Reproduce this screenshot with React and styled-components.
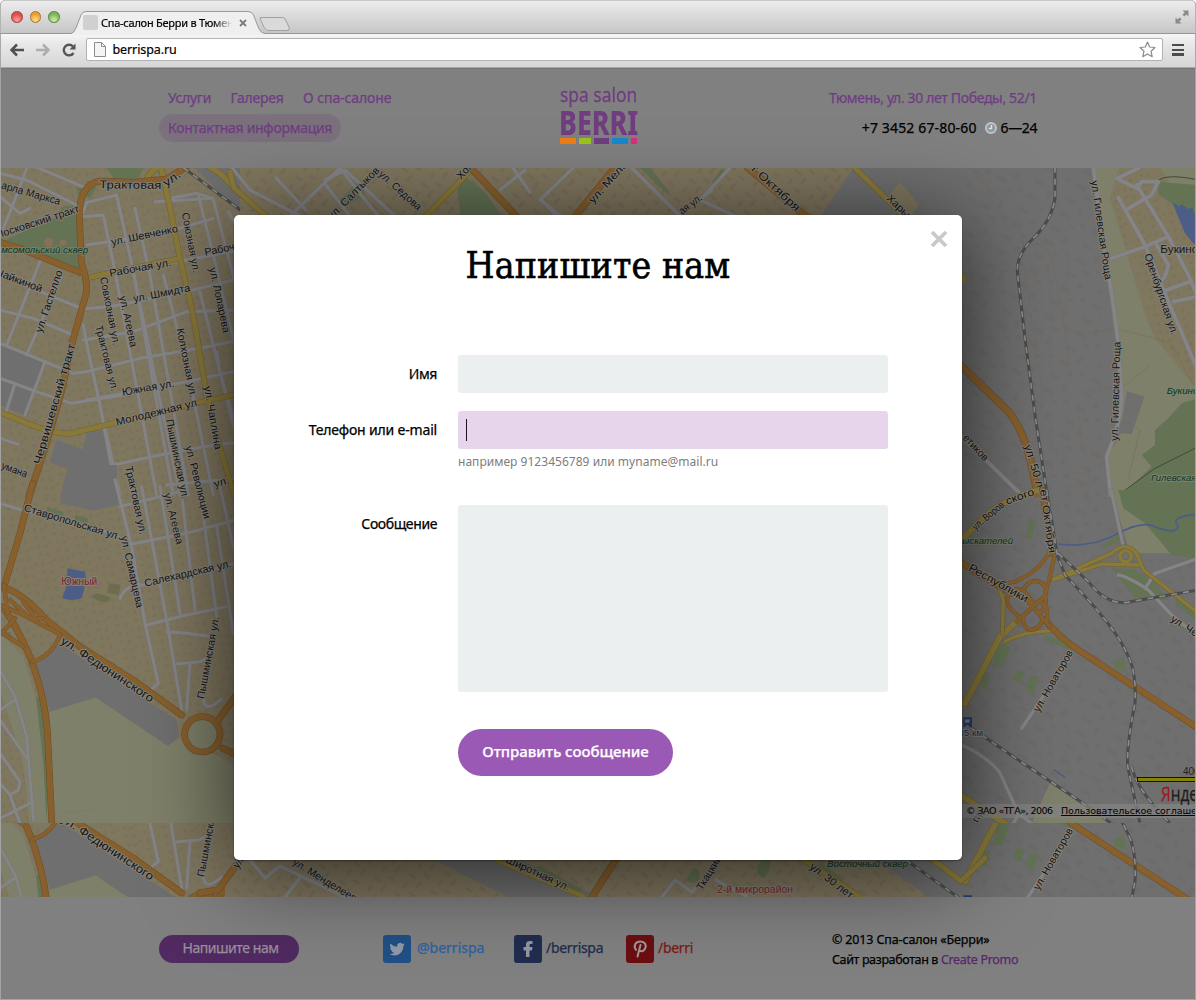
import React from 'react';
import styled, { createGlobalStyle, css } from 'styled-components';

const sans = '"Noto Sans", "Open Sans", sans-serif';
const serif = '"DejaVu Serif Condensed", "DejaVu Serif", serif';

const Global = createGlobalStyle`
  * { box-sizing: border-box; }
  body { margin: 0; background: #fff; font-family: ${sans}; }
`;

const Window = styled.div`
  position: relative;
  width: 1196px;
  height: 1000px;
  display: flex;
  flex-direction: column;
  overflow: hidden;
  border-radius: 5px 5px 0 0;
  background: #a8a8a8;
`;

/* ---------- browser chrome ---------- */
const TabStrip = styled.div`
  height: 34px;
  display: flex;
  align-items: flex-end;
  padding-left: 10px;
  border: 1px solid #b4b4b4;
  border-top-color: #c9c9c9;
  border-bottom: 1px solid #979797;
  border-radius: 5px 5px 0 0;
  background: linear-gradient(#ececec, #d9d9d9 50%, #c6c6c6);
`;
const Lights = styled.div`
  display: flex;
  gap: 7px;
  height: 22px;
  width: 60px;
`;
const Light = styled.span`
  width: 11.5px;
  height: 11.5px;
  border-radius: 50%;
  border: 1px solid ${(p) => p.$edge};
  background: radial-gradient(circle at 50% 80%, ${(p) => p.$glow}, ${(p) => p.$tone} 65%);
`;
const Tab = styled.div`
  position: relative;
  width: 194px;
  height: 23px;
  margin-bottom: -1px;
  display: flex;
  align-items: center;
  padding-left: 12px;
`;
const TabShape = styled.svg`
  position: absolute;
  left: 0;
  top: 0;
  width: 194px;
  height: 24px;
`;
const Favicon = styled.span`
  position: relative;
  width: 15px;
  height: 15px;
  border-radius: 2px;
  background: #d0d0d0;
`;
const TabTitle = styled.span`
  position: relative;
  width: 132px;
  margin-left: 3px;
  overflow: hidden;
  white-space: nowrap;
  font-size: 11px;
  line-height: 16px;
  letter-spacing: -0.25px;
  color: #000;
  -webkit-text-stroke: 0.2px #000;
  mask-image: linear-gradient(90deg, #000 112px, transparent 131px);
`;
const TabClose = styled.svg`
  position: relative;
  width: 8px;
  height: 8px;
  margin-left: 6px;
`;
const NewTab = styled.span`
  width: 26px;
  height: 14px;
  margin: 0 0 2px -3px;
  border: 1px solid #a0a0a0;
  border-radius: 3px 3px 4px 4px;
  background: #dadada;
  transform: skewX(25deg);
`;
const Expand = styled.svg`
  width: 14px;
  height: 14px;
  margin: 0 6px 9px auto;
`;
const Toolbar = styled.div`
  height: 34px;
  display: flex;
  align-items: center;
  padding: 0 11px 2px 8px;
  border: solid #a9a9a9;
  border-width: 0 1px 1px;
  background: linear-gradient(#f6f6f6, #e8e8e8 30%, #d6d6d6);
`;
const NavIcon = styled.svg`
  width: 16px;
  height: 16px;
  margin-right: ${(p) => p.$gap || 10}px;
`;
const Omnibox = styled.div`
  flex: 1;
  height: 23px;
  display: flex;
  align-items: center;
  padding: 0 6px 0 7px;
  margin-right: 9px;
  border: 1px solid #b1b1b1;
  border-radius: 2px;
  background: #fff;
`;
const Url = styled.span`
  flex: 1;
  margin-left: 7px;
  font-size: 12.5px;
  line-height: 18px;
  letter-spacing: -0.1px;
  color: #000;
  -webkit-text-stroke: 0.2px #000;
`;
const MenuIcon = styled.span`
  width: 12px;
  height: 12px;
  background: repeating-linear-gradient(#4c4c4c 0 2.5px, transparent 2.5px 4.7px);
`;

/* ---------- site ---------- */
const Site = styled.div`
  height: 932px;
  padding: 0 1px 1px;
  background: #a3a3a3;
`;
const Header = styled.header`
  height: 100px;
  display: grid;
  grid-template-columns: 1fr auto 1fr;
  padding: 0 158px;
  border-top: 1px solid #747474;
  background: #808080;
`;
const Nav = styled.nav`
  display: flex;
  flex-direction: column;
  align-items: flex-start;
  padding-top: 15px;
  color: #6f3d80;
`;
const NavRow = styled.div`
  display: flex;
  gap: 19.5px;
  height: 28px;
  padding: 0 9px;
  line-height: 28px;
  ${(p) =>
    p.$active &&
    css`
      margin-top: 2px;
      border-radius: 14px;
      background: #7a717d;
    `}
`;
const Text = styled.span`
  font-size: ${(p) => p.$size || 14}px;
  letter-spacing: ${(p) => p.$track || 0}px;
  white-space: nowrap;
  color: ${(p) => p.$color || 'inherit'};
  -webkit-text-stroke: ${(p) => (p.$thin ? 0 : 0.25)}px currentColor;
`;
const Logo = styled.div`
  display: flex;
  flex-direction: column;
  width: 78px;
  padding-top: 13px;
  color: #6f3d80;
`;
const LogoTop = styled.span`
  height: 26px;
  font-size: 20px;
  line-height: 26px;
  white-space: nowrap;
  transform: scaleX(0.87);
  transform-origin: 0 50%;
  margin-left: 1px;
  -webkit-text-stroke: 0.3px currentColor;
`;
const LogoName = styled.span`
  height: 30px;
  font-size: 33px;
  line-height: 30px;
  font-weight: 800;
  white-space: nowrap;
  transform: scaleX(0.81);
  transform-origin: 0 50%;
`;
const LogoBars = styled.div`
  display: flex;
  gap: 3px;
  height: 6px;
  margin-left: 1px;
`;
const Bar = styled.span`
  flex: ${(p) => p.$grow};
  background: ${(p) => p.$tone};
`;
const Contacts = styled.div`
  display: flex;
  flex-direction: column;
  align-items: flex-end;
  padding-top: 15px;
  line-height: 28px;
`;
const PhoneRow = styled.div`
  display: flex;
  align-items: center;
  margin-top: 2px;
  color: #000;
`;
const Clock = styled.svg`
  width: 12px;
  height: 12px;
  margin: 0 4px 0 8px;
`;
const MapSvg = styled.svg`
  display: block;
  width: 1194px;
  height: 729px;
`;
const Footer = styled.footer`
  height: 102px;
  display: grid;
  grid-template-columns: 224px 449px auto;
  align-items: start;
  padding: 38px 0 0 158px;
  background: #808080;
`;
const WriteButton = styled.button`
  width: 140px;
  height: 28px;
  padding: 0 0 3px 3px;
  border: 0;
  border-radius: 14px;
  background: #502a60;
  color: #9a8f9e;
  font-family: inherit;
`;
const Socials = styled.div`
  display: flex;
`;
const Social = styled.a`
  display: flex;
  align-items: center;
  gap: ${(p) => p.$gap}px;
  width: ${(p) => p.$width}px;
  color: ${(p) => p.$color};

  span {
    padding-bottom: 3px;
  }
`;
const SocialIcon = styled.svg`
  width: 28px;
  height: 28px;
  border-radius: 3px;
  background: ${(p) => p.$bg};
`;
const Legal = styled.div`
  display: flex;
  flex-direction: column;
  margin-top: -5px;
  line-height: 20px;
  color: #000;
`;

/* ---------- dialog ---------- */
const Dialog = styled.form`
  position: absolute;
  left: 234px;
  top: 215px;
  width: 728px;
  height: 645px;
  display: flex;
  flex-direction: column;
  border-radius: 5px;
  background: #fff;
  box-shadow: 0 10px 90px rgba(0, 0, 0, 0.68), 0 1px 2px rgba(0, 0, 0, 0.4);
`;
const Close = styled.svg`
  position: absolute;
  right: 14px;
  top: 15px;
  width: 18px;
  height: 18px;
`;
const Title = styled.h1`
  margin: 26px 0 64px;
  height: 50px;
  text-align: center;
  font: 400 37px/50px ${serif};
  letter-spacing: 0.15px;
  color: #000;
  -webkit-text-stroke: 0.6px #000;
`;
const Field = styled.div`
  display: grid;
  grid-template-columns: 203px 430px;
  column-gap: 21px;
  margin-bottom: ${(p) => p.$after}px;
`;
const Label = styled.label`
  text-align: right;
  line-height: 36px;
  color: #000;
`;
const Control = styled.div`
  display: flex;
  align-items: center;
  height: ${(p) => p.$height || 38}px;
  padding-left: 8px;
  border-radius: 3px;
  background: ${(p) => (p.$focused ? '#e6d5eb' : '#ebefef')};
`;
const Caret = styled.span`
  width: 1px;
  height: 22px;
  background: #1a1420;
`;
const Hint = styled.div`
  height: 24px;
  line-height: 22px;
`;
const Submit = styled.button`
  width: 215px;
  height: 47px;
  margin-left: 224px;
  padding: 0 0 4px;
  border: 0;
  border-radius: 24px;
  background: #9b59b6;
  color: #fff;
  font-family: inherit;
  font-weight: 500;
`;

/* ---------- map drawing ---------- */
const BEIGE = '#80775f';
const OLIVE = '#7f8069';
const GREY = '#6f6f6f';
const GREEN = '#637354';
const BLUE = '#4c5d88';

function Areas({ fill, list }) {
  return <g fill={fill}>{list.map((d) => <path key={d} d={d} />)}</g>;
}
function Roads({ list, color, edge, width, rim = 3 }) {
  return (
    <g fill="none" strokeLinecap="round" strokeLinejoin="round">
      <g stroke={edge} strokeWidth={width + rim}>{list.map((d) => <path key={d} d={d} />)}</g>
      <g stroke={color} strokeWidth={width}>{list.map((d) => <path key={d} d={d} />)}</g>
    </g>
  );
}
const orange = { color: '#87602e', edge: '#6d4c24' };
const yellow = { color: '#8a7a3a', edge: '#6f6233' };
const street = { color: '#858588', edge: '#77746c' };
function Rail({ list, k = 1 }) {
  return (
    <g fill="none">
      <g stroke="#4c4c4c" strokeWidth={3 * k}>{list.map((d) => <path key={d} d={d} />)}</g>
      <g stroke="#8c8c8c" strokeWidth={1.6 * k} strokeDasharray={`${6 * k} ${6 * k}`}>{list.map((d) => <path key={d} d={d} />)}</g>
    </g>
  );
}
/* each entry: text, x1, y1, x2, y2, font size */
function Names({ list, color = '#141414', italic, halo = '#87837a', k = 3 }) {
  return (
    <g fontFamily="Liberation Sans, Arial, sans-serif" fontStyle={italic ? 'italic' : 'normal'} fill={color}
      stroke={halo} strokeWidth={k * 1.8} strokeLinejoin="round" paintOrder="stroke">
      {list.map(([t, x1, y1, x2, y2, s]) => (
        <text key={t + x1 + y1} fontSize={s || 10.5 * k} textLength={Math.hypot(x2 - x1, y2 - y1)} lengthAdjust="spacingAndGlyphs"
          transform={`translate(${x1} ${y1}) rotate(${(Math.atan2(y2 - y1, x2 - x1) * 180) / Math.PI})`}>{t}</text>
      ))}
    </g>
  );
}

function TileNW() {
  return (
    <g transform="translate(0 165) scale(0.33333)">
      <path d="M0 0H720V1000H0Z" fill={BEIGE} />
      <path d="M0 0H720V1000H0Z" fill="url(#houses)" />
      <Areas fill={GREY} list={['M575 0H720V140Z', 'M0 530L135 588L82 755L0 720Z', 'M170 825L252 855L215 915L148 892Z', 'M262 800L308 795L355 1000H180L205 900L240 880Z']} />
      <Areas fill={GREEN} list={['M318 5H432L410 50L345 48Z', 'M60 205L235 128L246 312L10 228Z', 'M165 150L195 122L235 125L230 150Z', 'M230 70L290 65L270 100L235 90Z']} />
      <Areas fill="#85705c" list={['M132 232a14 14 0 1 0 28 0a14 14 0 1 0 -28 0', 'M178 233a11 9 0 1 0 22 0a11 9 0 1 0 -22 0']} />
      <Roads {...street} width={9} rim={2} list={[
        'M0 25L80 45L230 120', 'M95 0L260 70', 'M80 10L50 90L0 215', 'M0 95L60 145L90 130', 'M0 330L120 380L250 432',
        'M120 290L20 540', 'M185 330L80 570', 'M0 435L100 460L220 510', 'M0 535L220 625L260 620', 'M0 640L110 680L215 715L370 690',
        'M45 655L15 750', 'M135 590L75 750', 'M250 480L265 560L300 720L350 990', 'M260 112L350 90L400 320L520 990', 'M260 112L245 155L310 150L345 320L470 990',
        'M405 130L450 330L565 990', 'M465 110L640 100L590 85L510 100', 'M595 90L640 270L720 600', 'M640 105L720 410', 'M510 130L560 370',
        'M260 240L420 215L540 190L640 160', 'M400 310L530 290L720 255', 'M240 432L330 425L580 375L720 340', 'M250 525L400 500L560 440L720 435',
        'M260 620L420 580L600 550L720 525', 'M260 705L400 680L560 650L720 615', 'M490 330L560 600L640 990', 'M600 380L650 580L720 860', 'M650 560L660 620L700 760',
        'M340 900L480 870L610 845L720 830', 'M500 960L720 940', 'M685 140L720 200', 'M0 820L55 838', 'M315 790L360 990', 'M400 320L470 660L540 990',
      ]} />
      <Roads {...yellow} width={15} list={['M0 742L95 780Q185 815 225 803L350 772L600 712L720 685', 'M485 15L510 130L540 280L580 450L620 690L655 830L705 1000', 'M255 340L325 325L540 280', 'M440 45Q450 15 480 5', 'M620 0L660 25L720 85']} />
      <Roads {...orange} width={17} list={['M560 5L500 42L400 52L300 48Q238 60 238 150L244 290Q262 345 260 380L220 520L182 690L135 850L85 1000', 'M0 232L60 250L240 322']} />
      <Rail k={3} list={['M550 8L725 138']} />
      <Names list={[
        ['Трактовая', 298, 70, 484, 72, 34], ['ул.', 498, 66, 545, 34, 34], ['арла Маркса', 2, 70, 178, 120], ['Московский тракт', -12, 222, 240, 140], ['ул. Шевченко', 336, 242, 535, 200],
        ['Рабочая ул.', 330, 335, 515, 302], ['Рабоч', 616, 272, 705, 254], ['Чайкиной', -14, 330, 122, 382], ['ул. Гастелло', 125, 505, 188, 320], ['ул. Шмидта', 402, 412, 572, 378],
        ['Союзная ул.', 545, 145, 580, 325], ['Совхозная ул.', 300, 338, 340, 542], ['ул. Агеева', 358, 395, 392, 548], ['ул. Лопарева', 628, 310, 670, 505], ['Трактовая ул.', 286, 484, 335, 680],
        ['Колхозная ул.', 530, 492, 570, 698], ['Южная ул.', 368, 692, 524, 665], ['Молодежная ул.', 350, 782, 602, 720], ['ул. Чаплина', 612, 665, 645, 855],
        ['Червишевский тракт', 122, 900, 226, 540, 33], ['умана', 2, 910, 78, 938], ['ул. ', 645, 968, 690, 955],
      ]} />
      <Names italic color="#0c3324" halo="#78856c" list={[['мсомольский сквер', 4, 264, 264, 265, 29]]} />
    </g>
  );
}

function TileSW() {
  return (
    <g transform="translate(0 490) scale(0.33333)">
      <path d="M0 20H720V1010H0Z" fill={BEIGE} />
      <path d="M0 20H720V1010H0Z" fill="url(#houses)" />
      <Areas fill={OLIVE} list={['M0 430L70 500L130 700L150 1010H90L70 820L0 600Z', 'M148 665L285 622L500 765L550 740L660 800L720 840V1010H160Z']} />
      <Areas fill={GREY} list={['M205 -75L350 -75L355 45L280 62L180 40Z', 'M105 515L170 465L200 475L530 690L538 738L505 768L287 622L150 665Z']} />
      <Areas fill={GREEN} list={['M140 52L190 65V80L140 72Z', 'M225 75L265 85L262 98L225 95Z', 'M108 620L138 630L150 760L140 1000L130 820Z', 'M0 430L30 425L40 450Z']} />
      <Areas fill="#6c6c4e" list={['M275 322Q280 300 330 322Q330 342 300 335Z', 'M328 280L362 285L355 315L322 308Z']} />
      <Areas fill={BLUE} list={['M202 235L255 245Q262 270 245 325Q215 335 187 325L200 285Z']} />
      <Roads {...street} width={9} rim={2} list={[
        'M0 40L70 62L340 130L380 160', 'M345 -30L365 50L395 170L435 400L475 580L440 610', 'M380 165L560 130L720 85', 'M360 50L560 0', 'M425 -10L500 390L545 660',
        'M480 -10L540 370', 'M540 -30L585 360', 'M600 0L650 380', 'M660 -10L720 260', 'M360 325Q380 280 430 285L600 250L720 215', 'M440 405L560 375L680 350', 'M650 110L700 430',
        'M500 425L560 430L640 440', 'M530 522L600 515L625 500', 'M570 520L560 660', 'M610 620Q610 660 640 645L665 628', 'M0 540L45 620L80 740L100 990', 'M0 660L45 630', 'M0 690L85 810', 'M0 790L60 875L55 900L30 915L0 880', 'M0 985L100 935', 'M30 915L60 1000',
      ]} />
      <g stroke="#8a6a50" strokeWidth="1.5" fill="none" opacity=".6"><path d="M0 195L130 230M230 80L160 210L125 340M155 210L430 280M170 970L300 958M635 765L655 720" /></g>
      <path d="M607 673a60 60 0 1 0 .1 0" fill={OLIVE} />
      <Roads {...orange} width={17} list={[
        'M98 -20L60 130L15 280', 'M0 290Q60 300 140 390L240 470L400 570L545 675', 'M655 690L720 600', 'M668 775L725 800', 'M607 680a53 53 0 1 0 .1 0',
        'M15 360Q50 410 90 500Q142 640 144 760L156 1010',
      ]} />
      <Roads {...orange} width={11} rim={2} list={['M95 515Q155 500 180 435', 'M0 345L60 370L175 430', 'M12 285L22 370', 'M30 330L90 385L130 385', 'M70 335L110 390', 'M5 430L45 385', 'M0 425L70 470']} />
      <Names list={[
        ['Ставропольская ул.', 70, 62, 358, 150], ['Трактовая ул.', 376, -70, 420, 135], ['ул. Агеева', 492, 12, 530, 165], ['ул. Революции', 556, -130, 612, 88],
        ['Пышминская ул.', 498, -210, 546, 28], ['ул. Самарцева', 362, 140, 410, 355], ['Салехардская ул.', 436, 290, 695, 230],
        ['Пышминская ул.', 612, 628, 658, 382], ['ул. Федюнинского', 180, 458, 452, 638, 35],
      ]} />
      <Names color="#7c2326" list={[['Южный', 184, 286, 292, 286, 30]]} />
    </g>
  );
}

function TileNE() {
  return (
    <g transform="translate(955 165) scale(0.33333)">
      <path d="M0 0H730V1000H0Z" fill={GREY} />
      <path d="M0 0H440V1000H0Z" fill="url(#blocks)" />
      <Areas fill={OLIVE} list={['M415 0H730V1000H465L455 880L500 800L498 600L475 480L448 250Z']} />
      <Areas fill={BEIGE} list={['M495 0H610L730 180V680L600 520L570 450L465 100Z']} />
      <path d="M495 20H610L730 190V660L600 515L572 440L468 100Z" fill="url(#houses)" />
      <Areas fill={GREY} list={['M515 678L568 695L530 808L495 805Z']} />
      <Areas fill={GREEN} list={['M605 50L730 60V240L690 170L650 115L612 90Z', 'M560 870L600 840L600 795L640 760L680 715L730 700V1000H490L590 905Z']} />
      <Areas fill={BLUE} list={['M652 112L672 125L680 118L700 132L712 128L720 150L730 160V245L712 232L690 205Z']} />
      <g stroke="#7d6450" strokeWidth="2" fill="none" opacity=".7"><path d="M50 0Q60 50 100 55L105 100L205 210V250M30 335Q80 350 120 320L200 312M210 235Q270 225 290 280L330 500L350 650M208 310L262 690M330 495L390 508L475 490M385 682L490 665M370 750L385 865L450 880M480 490L640 530M640 520L715 660M475 690L585 600M500 765L555 795L520 940M320 970L405 960V920L350 925" /></g>
      <path d="M610 45Q640 25 730 45M490 990L600 910L730 845" stroke="#3e4a34" strokeWidth="3" fill="none" />
      <Rail k={3} list={['M300 5V100Q290 165 240 215Q180 270 188 330L210 520L240 750L278 1000']} />
      <Roads {...street} width={11} rim={2} list={['M415 5L440 200L475 420L488 520L500 690Q500 770 455 875L468 1000', 'M490 98L570 240L640 410L730 620', 'M470 280L570 245L640 215', 'M520 130L590 90L610 50L560 50L545 70L485 40L550 10', 'M545 60L640 215L700 330L730 400', 'M605 240L640 300L630 335L600 370', 'M635 375L710 348', 'M655 410L725 395', 'M10 805L210 1000']} />
      <Roads {...orange} width={20} list={['M0 588L22 605L165 745Q205 800 225 880L250 1000']} />
      <Names list={[['ул. Гилевская Роща', 408, 48, 450, 345], ['ул. Гилевская Роща', 488, 828, 496, 530], ['Оренбургская ул.', 568, 270, 650, 512], ['Букинс', 616, 265, 728, 265, 34], ['ул. 50 ле', 208, 842, 252, 990, 33], ['етиков', 22, 820, 88, 890]]} />
      <Names italic color="#0c3324" halo="#78856c" list={[['Букино', 635, 688, 730, 688, 27], ['Гилевская', 588, 947, 724, 947, 27]]} />
      <circle cx="17" cy="340" r="14" fill="#8a7a2c" />
    </g>
  );
}

function TileSE() {
  return (
    <g transform="translate(955 490) scale(0.33333)">
      <path d="M0 20H730V1010H0Z" fill={GREY} />
      <path d="M0 20H730V1010H0Z" fill="url(#blocks)" />
      <Areas fill={OLIVE} list={['M468 0H730V190H525Z', 'M285 880L480 1010H225Z']} />
      <Areas fill={GREEN} list={['M490 0H730V205L650 195L570 100L505 55Z', 'M440 165L490 135L495 150L450 175Z', 'M470 235L540 240L600 280L640 330L540 325Z', 'M660 340L730 395V375L665 325Z', 'M218 100L240 90L232 150L215 145Z', 'M185 540L210 545L195 580L175 570Z', 'M225 555L250 560L235 610L212 600Z', 'M130 460L165 470L140 535L115 525Z', 'M80 545L105 550L95 600L78 590Z', 'M265 435L340 455L350 480L280 455Z', 'M475 515L505 500L515 545L480 535Z']} />
      <path d="M310 162Q400 175 480 135Q560 90 600 110Q660 135 670 110Q640 80 730 72M295 838L330 862" stroke={BLUE} strokeWidth="5" fill="none" />
      <Roads {...street} width={9} rim={2} list={['M468 0L505 170', 'M490 255Q520 260 580 300L650 375L730 440', 'M570 295L600 250L730 205', 'M345 500L200 715', 'M0 755L60 785Q130 830 140 860L190 970L230 1000', 'M190 975L175 1000']} />
      <Roads {...yellow} width={17} list={['M30 640L135 440L195 385', 'M28 142L85 85Q140 30 250 0', 'M0 905L150 1000', 'M0 638L30 640']} />
      <Roads {...yellow} width={10} list={['M125 275L145 330L142 430', 'M150 455Q200 425 290 422', 'M295 268L470 190Q510 150 545 190L565 240L730 370', 'M295 270L440 222L550 225', 'M512 182a17 17 0 1 0 .1 0']} />
      <Roads {...orange} width={17} list={['M262 0L290 190', 'M0 205L60 245L170 310', 'M270 390Q310 440 370 480L600 630L730 715']} />
      <Roads {...orange} width={10} rim={2} list={[
        'M285 180Q260 240 180 275L135 285', 'M300 190L282 270L270 310L278 395', 'M240 345L205 300Q165 290 157 325Q150 350 200 385',
        'M205 300Q225 260 262 280Q285 305 262 325L185 395', 'M240 345L225 335', 'M205 380Q200 415 232 420Q262 410 262 385L228 340', 'M240 340Q262 325 268 355Q262 370 245 362', 'M215 330L285 410',
      ]} />
      <Rail k={3} list={['M275 0L308 200L330 255L400 330Q490 430 515 490Q545 540 540 640Q515 760 518 830L555 1000', 'M310 190L400 275Q450 340 510 338L730 300', 'M50 715L160 790L400 950L475 1005', 'M530 830Q545 900 645 1000']} />
      <Names list={[['ул. Воров', 62, 122, 150, 48], ['ского', 156, 44, 240, 14], ['ет Октября', 255, 0, 282, 190, 32], ['Республики', 38, 240, 212, 338, 34], ['ул. Новаторов', 252, 668, 355, 488], ['ул. Чер', 645, 392, 735, 450], ['пр', 68, 1000, 85, 965]]} />
      <Names italic color="#0c3324" halo="#78806f" list={[['ыскателей', 22, 162, 174, 162, 28]]} />
      <path d="M25 682h26v30h-6l-6-8h-4l-6 8h-4Z" fill="#24406e" /><rect x="30" y="688" width="14" height="10" fill="#77818f" />
      <Names color="#1d3560" list={[['45 км', 10, 737, 84, 737, 25]]} />
    </g>
  );
}

function NorthStrip() {
  return (
    <g>
      <path d="M240 168H962V217H240Z" fill={BEIGE} />
      <path d="M240 168H850L820 217H240Z" fill="url(#housesSmall)" />
      <path d="M853 168H962V217H820Z" fill={GREY} />
      <path d="M900 182L919 205L910 217L888 197Z" fill={BEIGE} />
      <path d="M457 185L467 178L485 192L503 218H461ZM340 200L360 180L365 195L350 204ZM640 168L670 196L668 190L650 168ZM715 186L725 172L722 168L712 182Z" fill={GREEN} />
      <g transform="translate(0 0)">
        <Roads {...street} width={3.2} rim={0.8} list={['M232 168L250 190L300 216', 'M276 178L306 210', 'M340 168L290 216', 'M325 184L350 216', 'M325 180L345 170L395 216', 'M500 190L525 170', 'M513 168L530 192', 'M573 168L540 200L560 215', 'M541 199L556 216', 'M632 168L680 216', 'M730 168L700 200L735 216', 'M700 200L712 190', 'M340 168L378 216']} />
        <Roads {...yellow} width={5} rim={1} list={['M230 172L234 188L268 218', 'M471 170L424 218', 'M855 168L906 218']} />
        <Roads {...orange} width={6} rim={1} list={['M471 168L518 218', 'M616 166L574 218', 'M748 168L808 218']} />
      </g>
      <Names k={1} list={[['ул. Салтыков', 332, 220, 380, 171], ['ул. Седова', 378, 175, 418, 211], ['Хол', 461, 180, 474, 166], ['ул. Мель', 593, 204, 628, 165], ['ая ул.', 682, 215, 703, 199], ['нт Октября', 744, 164, 796, 212, 11.5], ['Харьк', 886, 199, 908, 220]]} />
    </g>
  );
}

function SouthStrip() {
  return (
    <g>
      <path d="M225 850H962V897H225Z" fill={BEIGE} />
      <path d="M225 850H962V897H225Z" fill="url(#housesSmall)" />
      <path d="M420 850L434 860L508 897H600L498 850ZM862 850L929 897H962V850Z" fill={GREY} />
      <path d="M540 866L582 889L578 892L530 868ZM820 862L844 880L838 884L818 868ZM687 880q2-8 8-12q6 2 4 12q-6 6-12 0M758 866q4-8 12-6q2 8-6 18q-8-2-6-12" fill={GREEN} />
      <Roads {...street} width={3.2} rim={0.8} list={['M250 860L265 878L280 866L345 897', 'M300 878L285 897', 'M662 897L675 880L692 892L715 866', 'M716 880L748 897']} />
      <Roads {...yellow} width={5} rim={1} list={['M496 860L583 896', 'M798 856L860 897', 'M928 856L961 881L985 858']} />
      <Roads {...orange} width={6} rim={1} list={['M618 856L590 900', 'M243 856L218 890L200 893']} />
      <Rail list={['M906 860L962 900']} />
      <Names k={1} list={[['ул. Менделеев', 292, 864, 354, 902], ['Широтная ул.', 505, 862, 568, 891], ['Ткацкий', 702, 891, 722, 858], ['ул. 30 лет', 809, 868, 850, 899], ['ул', 238, 869, 244, 860]]} />
      <Names k={1} color="#7c2326" list={[['2-й микрорайон', 717, 893, 793, 893, 10]]} />
      <Names k={1} italic color="#0c3324" halo="#767c6c" list={[['Восточный сквер', 827, 867, 908, 867, 9.5]]} />
    </g>
  );
}

function CityMap() {
  return (
    <MapSvg viewBox="1 168 1194 729">
      <defs>
        <pattern id="houses" width="58" height="52" patternUnits="userSpaceOnUse" patternTransform="rotate(-14)">
          <path d="M6 6h12v8h-12zM30 10h9v12h-9zM46 30h8v8h-8zM10 32h8v12h-8zM28 38h13v6h-13z" fill="#756a57" opacity=".38" />
        </pattern>
        <pattern id="housesSmall" width="26" height="24" patternUnits="userSpaceOnUse" patternTransform="rotate(38)">
          <path d="M3 3h8v3h-8zM15 4h3v8h-3zM5 13h3v6h-3zM14 18h7v3h-7z" fill="#756555" opacity=".4" />
        </pattern>
        <pattern id="blocks" width="110" height="96" patternUnits="userSpaceOnUse" patternTransform="rotate(30)">
          <path d="M10 10h30v12h-30zM60 20h14v22h-14zM86 60h18v10h-18zM14 54h34v14h-34zM54 78h22v10h-22z" fill="#686762" opacity=".4" />
        </pattern>
        <clipPath id="upper"><rect x="0" y="168" width="1196" height="655" /></clipPath>
        <clipPath id="lower"><rect x="0" y="645" width="1196" height="75" /></clipPath>
        <g id="south"><TileSW /><TileSE /></g>
      </defs>
      <g clipPath="url(#upper)">
        <TileNW />
        <TileNE />
        <use href="#south" />
        <NorthStrip />
        <rect x="962" y="804" width="234" height="14" fill="#858585" opacity=".7" />
        <g fontFamily="DejaVu Sans, sans-serif" fontSize="9.5" fill="#000">
          <text x="966" y="814" textLength="87">© ЗАО «ТГА», 2006</text>
          <text x="1061" y="814" textLength="142" textDecoration="underline">Пользовательское соглашен</text>
        </g>
        <text x="1183" y="775" fontFamily="Liberation Sans, sans-serif" fontSize="10" fill="#222">400</text>
        <rect x="1137.500" y="777.500" width="80" height="4" fill="#848400" stroke="#111" />
        <text x="1161" y="801" fontFamily="Open Sans, sans-serif" fontSize="20" fill="#1c1c1c" stroke="#1c1c1c" strokeWidth=".3" textLength="45" lengthAdjust="spacingAndGlyphs"><tspan fill="#9c1c1c" stroke="#9c1c1c">Я</tspan>ндек</text>
      </g>
      <g transform="translate(0 178)"><g clipPath="url(#lower)"><use href="#south" /></g></g>
      <SouthStrip />
    </MapSvg>
  );
}

export default function App() {
  return (
    <Window>
      <Global />
      <TabStrip>
        <Lights>
          <Light $edge="#a13d3d" $tone="#d84d4d" $glow="#ff9d98" />
          <Light $edge="#a8732c" $tone="#e79e36" $glow="#ffdf8a" />
          <Light $edge="#57813f" $tone="#7db458" $glow="#cdeea5" />
        </Lights>
        <Tab>
          <TabShape viewBox="0 0 194 24">
            <path d="M0 22.500Q3 22 5 17L10 4Q11.500 .5 15 .5H177Q181 .5 182.500 4L188 18Q190 22 194 22.500V24H0Z" fill="#efefef" />
            <path d="M0 22.500Q3 22 5 17L10 4Q11.500 .5 15 .5H177Q181 .5 182.500 4L188 18Q190 22 194 22.500" fill="none" stroke="#999" />
          </TabShape>
          <Favicon />
          <TabTitle>Спа-салон Берри в Тюмени</TabTitle>
          <TabClose viewBox="0 0 8 8"><path d="M1 1L7 7M7 1L1 7" stroke="#7b7b7b" strokeWidth="1.800" /></TabClose>
        </Tab>
        <NewTab />
        <Expand viewBox="0 0 14 14" fill="#8a8a8a">
          <path d="M7.500 .5H13.500V6.500L11.400 4.400L9.300 6.500L7.500 4.700L9.600 2.600ZM6.500 13.500H.5V7.500L2.600 9.600L4.700 7.500L6.500 9.300L4.400 11.400Z" />
        </Expand>
      </TabStrip>
      <Toolbar>
        <NavIcon viewBox="0 0 16 16" fill="none" stroke="#505050" strokeWidth="2.500"><path d="M15 8H3M8 2.500L2.500 8L8 13.500" /></NavIcon>
        <NavIcon viewBox="0 0 16 16" fill="none" stroke="#adadad" strokeWidth="2.500"><path d="M1 8H13M8 2.500L13.500 8L8 13.500" /></NavIcon>
        <NavIcon $gap={8.5} viewBox="0 0 16 16"><path d="M12.500 11A5.300 5.300 0 1 1 12 4.500" fill="none" stroke="#555" strokeWidth="2.400" /><path d="M14.500 1.500V7.500H8.500Z" fill="#555" /></NavIcon>
        <Omnibox>
          <svg width="12" height="15" viewBox="0 0 12 15"><path d="M.5 .5H7.500L11.500 4.500V14.500H.5ZM7.500 .5V4.500H11.500" fill="#f4f4f4" stroke="#8d8d8d" /></svg>
          <Url>berrispa.ru</Url>
          <svg width="17" height="17" viewBox="0 0 17 17"><path d="M8.500 1L10.700 6L16 6.500L12 10.200L13.200 15.700L8.500 12.900L3.800 15.700L5 10.200L1 6.500L6.300 6Z" fill="#fff" stroke="#8a8a8a" strokeWidth="1.200" strokeLinejoin="round" /></svg>
        </Omnibox>
        <MenuIcon />
      </Toolbar>

      <Site>
        <Header>
          <Nav>
            <NavRow>
              <Text $track={-0.3}>Услуги</Text>
              <Text $track={-0.2}>Галерея</Text>
              <Text $track={-0.1}>О спа-салоне</Text>
            </NavRow>
            <NavRow $active><Text $track={-0.28}>Контактная информация</Text></NavRow>
          </Nav>
          <Logo>
            <LogoTop>spa salon</LogoTop>
            <LogoName>BERRI</LogoName>
            <LogoBars>
              <Bar $grow={16} $tone="#ef7d15" /><Bar $grow={12} $tone="#9ec41c" /><Bar $grow={16} $tone="#6f3d80" /><Bar $grow={16} $tone="#1789d0" /><Bar $grow={6} $tone="#d92e82" />
            </LogoBars>
          </Logo>
          <Contacts>
            <Text $track={-0.34} $color="#6f3d80">Тюмень, ул. 30 лет Победы, 52/1</Text>
            <PhoneRow>
              <Text $track={0.15}>+7 3452 67-80-60</Text>
              <Clock viewBox="0 0 12 12"><circle cx="6" cy="6" r="5" fill="#8f989f" stroke="#bcc5cb" strokeWidth="2" /><path d="M6.500 3V6.500H3.800" fill="none" stroke="#dfe4e8" strokeWidth="1.400" /></Clock>
              <Text $track={-0.4}>6—24</Text>
            </PhoneRow>
          </Contacts>
        </Header>
        <CityMap />
        <Footer>
          <WriteButton><Text $track={-0.45}>Напишите нам</Text></WriteButton>
          <Socials>
            <Social $color="#2b62a2" $gap={6} $width={131}>
              <SocialIcon $bg="#205086" viewBox="0 0 28 28"><g transform="translate(6.500 6.500) scale(.64)"><path fill="#909aa6" d="M23.950 4.570a10 10 0 0 1-2.820.77 4.960 4.960 0 0 0 2.160-2.720c-.95.55-2 .95-3.130 1.190a4.920 4.920 0 0 0-8.380 4.480C7.690 8.090 4.070 6.130 1.640 3.160a4.920 4.920 0 0 0 1.520 6.570 4.900 4.900 0 0 1-2.230-.61v.06a4.920 4.920 0 0 0 3.950 4.830 5 5 0 0 1-2.210.08 4.940 4.940 0 0 0 4.600 3.420A9.870 9.870 0 0 1 0 19.540a14 14 0 0 0 7.550 2.210c9.050 0 14-7.500 14-13.980 0-.21 0-.42-.02-.63a9.940 9.940 0 0 0 2.420-2.570Z" /></g></SocialIcon>
              <Text>@berrispa</Text>
            </Social>
            <Social $color="#1f2c4d" $gap={4} $width={112}>
              <SocialIcon $bg="#202d50" viewBox="0 0 28 28"><path fill="#9297a1" d="M12 22V15.500H9.500V12H12V9.500C12 7 13.500 6 16 6H18.500V9H17C15.800 9 15.500 9.500 15.500 10.300V12H18.500L18 15.500H15.500V22Z" /></SocialIcon>
              <Text $track={-0.32}>/berrispa</Text>
            </Social>
            <Social $color="#7c1a16" $gap={4} $width={80}>
              <SocialIcon $bg="#6b0e12" viewBox="0 0 28 28"><path fill="none" stroke="#a39694" strokeWidth="2" strokeLinecap="round" d="M10 15C7 11 9.500 6.500 14.500 6.500C19 6.500 20.500 10 19.300 13.200C18 16.700 14.500 17 13.200 15M14.500 10L11.500 21.500" /></SocialIcon>
              <Text $track={-0.3}>/berri</Text>
            </Social>
          </Socials>
          <Legal>
            <Text $size={12.5} $track={-0.15}>© 2013 Спа-салон «Берри»</Text>
            <Text $size={12.5} $track={-0.38}>Сайт разработан в <Text as="a" $size={12.5} $track={-0.3} $color="#58286c">Create Promo</Text></Text>
          </Legal>
        </Footer>
      </Site>

      <Dialog>
        <Close viewBox="0 0 18 18"><path d="M2 2L16 16M16 2L2 16" stroke="#c9c9c9" strokeWidth="3.800" /></Close>
        <Title>Напишите нам</Title>
        <Field $after={18}>
          <Label><Text $track={-0.4}>Имя</Text></Label>
          <Control />
        </Field>
        <Field $after={32}>
          <Label><Text $track={-0.18}>Телефон или e-mail</Text></Label>
          <div>
            <Control $focused><Caret /></Control>
            <Hint><Text $thin $size={12} $track={0.03} $color="#7d7d7d">например 9123456789 или myname@mail.ru</Text></Hint>
          </div>
        </Field>
        <Field $after={37}>
          <Label><Text $track={-0.4}>Сообщение</Text></Label>
          <Control $height={187} />
        </Field>
        <Submit type="button"><Text $size={15} $track={-0.05}>Отправить сообщение</Text></Submit>
      </Dialog>
    </Window>
  );
}
